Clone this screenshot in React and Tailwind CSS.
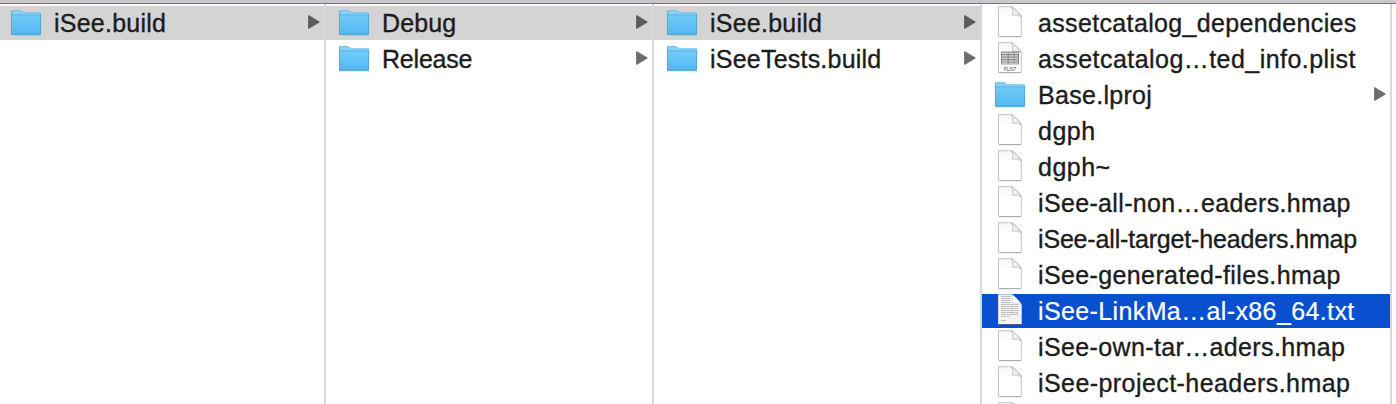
import React from "react";

function FolderIcon() {
  return (
    <svg width="32" height="27" viewBox="0 0 32 27" className="block">
      <defs>
        <linearGradient id="folderFront" x1="0" y1="0" x2="0" y2="1">
          <stop offset="0" stopColor="#6fcbf9" />
          <stop offset="1" stopColor="#56b9f3" />
        </linearGradient>
      </defs>
      <path d="M1 25h30" stroke="#000" strokeOpacity=".16" strokeWidth="1" />
      <path d="M1 1.2Q1 .3 1.8 .3H9.4Q10.4 .3 11.2 1L12.4 2Q13 2.5 14 2.5H30.2Q31 2.5 31 3.3V23.6Q31 24.4 30.2 24.4H1.8Q1 24.4 1 23.6Z" fill="#84d2f7" />
      <path d="M1.2 1.2Q1.2 .5 1.9 .5H9.4Q10.4 .5 11.2 1.2L12.4 2.2Q13 2.7 14 2.7H30.2" fill="none" stroke="#58b4dc" strokeWidth=".6" />
      <path d="M1 5H31V23.6Q31 24.4 30.2 24.4H1.8Q1 24.4 1 23.6Z" fill="url(#folderFront)" />
      <path d="M1 4.9H31" stroke="#4fafe0" strokeWidth=".8" />
      <path d="M1.4 1.4V23.4M30.6 3.4V23.4" stroke="#4da6d8" strokeWidth=".8" />
      <path d="M1.2 24.1H30.8" stroke="#4296c8" strokeWidth=".9" />
    </svg>
  );
}

function FileIcon({ kind }) {
  const txt = kind === "txt";
  return (
    <svg width="26" height="33" viewBox="0 0 26 33" className="block">
      <defs>
        <linearGradient id="fold" x1="0" y1="1" x2="1" y2="0">
          <stop offset="0" stopColor="#ffffff" />
          <stop offset="1" stopColor="#dedede" />
        </linearGradient>
        <linearGradient id="paper" x1="0" y1="0" x2="0" y2="1">
          <stop offset="0" stopColor="#f8f8f8" />
          <stop offset=".4" stopColor="#ffffff" />
        </linearGradient>
      </defs>
      <path d="M1.5 .7H13.6Q15.6 .7 17.2 2.3L22.7 7.8Q24.3 9.4 24.3 11.4V29.8Q24.3 30.5 23.6 30.5H2.2Q1.5 30.5 1.5 29.8Z" fill={txt ? "#f4f4f4" : "url(#paper)"} stroke={txt ? "#d9d9d9" : "#c3c3c3"} strokeWidth="1" />
      <path d="M1.8 30.7H24" stroke={txt ? "#23345f" : "#a6a6a6"} strokeWidth=".9" />
      {txt && <path d="M15.6 .1H25V10Z" fill="#0850d0" />}
      <path d="M14.6 .9Q16.6 4.6 15.6 9.2Q20.3 8 24 10.6Q22 6.8 19.4 4.4Q16.8 1.7 14.6 .9Z" fill={txt ? "#ffffff" : "url(#fold)"} stroke={txt ? "#dcdcdc" : "#b4b4b4"} strokeWidth=".8" />
      {txt && (
        <g stroke="#777777" strokeWidth=".9" strokeOpacity=".5">
          <path d="M4 2.5H13.5M4 4.5H14M4 6.5H13.5M4 8.5H14" />
          <path d="M4 10.5H21.5M4 12.5H22M4 14.5H20.5M4 16.5H22M4 18.5H21M4 20.5H22M4 22.5H13" strokeDasharray="5 .4 3 .3" />
          <path d="M4 26.5H9" />
        </g>
      )}
      {kind === "plist" && (
        <g>
          <path d="M4 9.5H22V22.4H4Z" fill="#8b8b8b" />
          <path d="M5 11.3H10.7M11.8 11.3H21M5 13.8H10.7M11.8 13.8H21M5 16.3H10.7M11.8 16.3H21M5 18.8H10.7M11.8 18.8H21M5 21.2H10.7M11.8 21.2H21" stroke="#dddddd" strokeWidth="1.3" />
          <path d="M17 10V22" stroke="#8b8b8b" strokeWidth=".6" />
          <text x="13" y="28.7" textAnchor="middle" textLength="12.4" lengthAdjust="spacingAndGlyphs" fontSize="5.8" fontFamily="Liberation Sans, sans-serif" fill="#4a4a4a">PLIST</text>
        </g>
      )}
    </svg>
  );
}

function Arrow({ selected }) {
  const color = selected ? "#5c5c5c" : "#6c6c6c";
  return (
    <svg width="12" height="14" viewBox="0 0 12 14" className="mt-[9px] mr-1 block shrink-0">
      <path d="M.8 .6L11.2 6.8Q11.5 7 11.2 7.2L.8 13.4Q.5 13.5 .5 13.2V.8Q.5 .5 .8 .6Z" fill={color} stroke={color} strokeWidth=".8" strokeLinejoin="round" />
    </svg>
  );
}

function Row({ item, first }) {
  const folder = item.kind === "folder";
  const bg = item.active
    ? "bg-[#0850d0] text-white [-webkit-text-stroke:0.2px_#ffffff]"
    : item.selected
      ? "bg-[#d4d4d4] text-[#1c1c1c] [-webkit-text-stroke:0.35px_#1c1c1c]"
      : "text-[#1c1c1c] [-webkit-text-stroke:0.35px_#1c1c1c]";
  return (
    <li className={`flex h-[34px] shrink-0 items-start ${first ? "pl-[10px]" : "pl-3"} ${bg}`}>
      <span className="flex w-11 shrink-0">
        {folder ? <span className="pt-1"><FolderIcon /></span> : <span className="pl-[3px]"><FileIcon kind={item.kind} /></span>}
      </span>
      <span className={`flex-1 whitespace-nowrap text-[25px] leading-[34px] ${item.track || "tracking-[0.3px]"}`}>{item.name}</span>
      {folder && <Arrow selected={item.selected} />}
    </li>
  );
}

const columns = [
  { width: "w-[326px]", items: [{ name: "iSee.build", kind: "folder", selected: true, track: "tracking-[0.23px]" }] },
  {
    width: "w-[328px]",
    items: [
      { name: "Debug", kind: "folder", selected: true, track: "tracking-[0.1px]" },
      { name: "Release", kind: "folder", track: "tracking-[-0.2px]" },
    ],
  },
  {
    width: "w-[328px]",
    items: [
      { name: "iSee.build", kind: "folder", selected: true, track: "tracking-[0.23px]" },
      { name: "iSeeTests.build", kind: "folder", track: "tracking-[0.22px]" },
    ],
  },
  {
    width: "w-[410px]",
    items: [
      { name: "assetcatalog_dependencies", track: "tracking-[0.35px]" },
      { name: "assetcatalog…ted_info.plist", kind: "plist", track: "tracking-[0.45px]" },
      { name: "Base.lproj", kind: "folder" },
      { name: "dgph", track: "tracking-[0.5px]" },
      { name: "dgph~", track: "tracking-[0.5px]" },
      { name: "iSee-all-non…eaders.hmap", track: "tracking-[0.35px]" },
      { name: "iSee-all-target-headers.hmap", track: "tracking-[-0.17px]" },
      { name: "iSee-generated-files.hmap", track: "tracking-[0.38px]" },
      { name: "iSee-LinkMa…al-x86_64.txt", kind: "txt", active: true, track: "tracking-[0.38px]" },
      { name: "iSee-own-tar…aders.hmap", track: "tracking-[0.37px]" },
      { name: "iSee-project-headers.hmap", track: "tracking-[0.43px]" },
      { name: "" },
    ],
  },
];

export default function App() {
  return (
    <div className="flex h-screen w-full flex-col overflow-hidden bg-white font-['Liberation_Sans',Arial,sans-serif]">
      <div className="h-1 shrink-0 border-b border-[#77757a] bg-[#c9c7cc]" />
      <main className="flex min-h-0 flex-1">
        {columns.map((column, index) => (
          <ul key={index} className={`flex shrink-0 flex-col gap-0.5 overflow-hidden border-r-2 border-[#d8d8d8] pt-0.5 ${column.width}`}>
            {column.items.map((item, i) => (
              <Row key={i} item={item} first={index === 0} />
            ))}
          </ul>
        ))}
      </main>
    </div>
  );
}
